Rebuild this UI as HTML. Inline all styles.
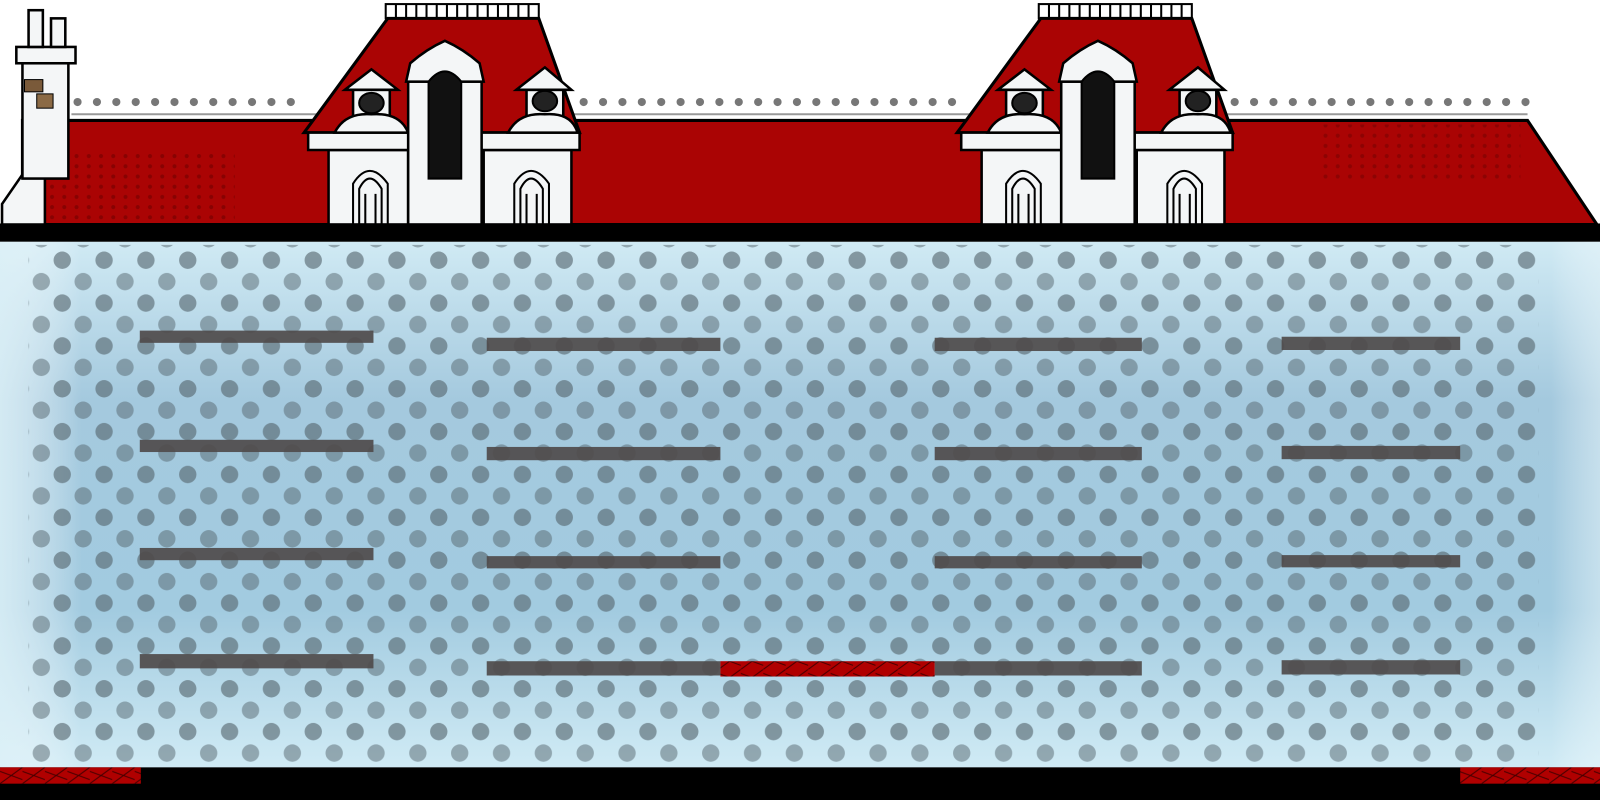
<!DOCTYPE html>
<html><head><meta charset="utf-8"><style>
html,body{margin:0;padding:0;width:1600px;height:800px;overflow:hidden;background:#fff}
svg{display:block}
</style></head><body>
<svg width="1600" height="800" viewBox="0 0 1600 800" xmlns="http://www.w3.org/2000/svg">
<defs>
<linearGradient id="sky" x1="0" y1="0" x2="0" y2="1">
<stop offset="0" stop-color="#d0eaf4"/><stop offset="0.3" stop-color="#a4c9de"/><stop offset="0.7" stop-color="#a2cbe0"/><stop offset="1" stop-color="#d0ebf5"/>
</linearGradient>
<linearGradient id="side" x1="0" y1="0" x2="1" y2="0">
<stop offset="0" stop-color="#dff2f8" stop-opacity="0.8"/><stop offset="0.05" stop-color="#fff" stop-opacity="0"/><stop offset="0.95" stop-color="#fff" stop-opacity="0"/><stop offset="1" stop-color="#dff2f8" stop-opacity="0.8"/>
</linearGradient>
<pattern id="dots" width="41" height="42" patternUnits="userSpaceOnUse" x="10" y="245">
<circle cx="10" cy="10" r="8.5" fill="#56666e" opacity="0.62"/>
<circle cx="30.5" cy="31" r="8.5" fill="#56666e" opacity="0.5"/>
</pattern>
<pattern id="rdots" width="12" height="10" patternUnits="userSpaceOnUse">
<circle cx="3" cy="3" r="2" fill="#5a0000" opacity="0.6"/>
</pattern>
<pattern id="hatch" width="22" height="16" patternUnits="userSpaceOnUse">
<rect width="22" height="16" fill="#b00000"/>
<path d="M0 16 L22 0 M0 4 L22 12" stroke="#400" stroke-width="1"/>
</pattern>
<g id="dormer">
<polygon points="82,18 230,18 270,130 0,130" fill="#aa0404" stroke="#000" stroke-width="3"/>
<rect x="80" y="4" width="150" height="14" fill="none" stroke="#000" stroke-width="2"/>
<g stroke="#000" stroke-width="2">
<line x1="90" y1="4" x2="90" y2="18"/><line x1="100" y1="4" x2="100" y2="18"/><line x1="110" y1="4" x2="110" y2="18"/><line x1="120" y1="4" x2="120" y2="18"/><line x1="130" y1="4" x2="130" y2="18"/><line x1="140" y1="4" x2="140" y2="18"/><line x1="150" y1="4" x2="150" y2="18"/><line x1="160" y1="4" x2="160" y2="18"/><line x1="170" y1="4" x2="170" y2="18"/><line x1="180" y1="4" x2="180" y2="18"/><line x1="190" y1="4" x2="190" y2="18"/><line x1="200" y1="4" x2="200" y2="18"/><line x1="210" y1="4" x2="210" y2="18"/><line x1="220" y1="4" x2="220" y2="18"/>
</g>
<g fill="#f4f6f7" stroke="#000" stroke-width="2.5">
<rect x="24" y="147" width="78" height="73"/>
<rect x="176" y="147" width="86" height="73"/>
<polygon points="4,130 105,130 105,147 4,147"/>
<polygon points="172,130 270,130 270,147 172,147"/>
<rect x="48" y="88" width="36" height="34"/>
<rect x="218" y="88" width="36" height="34"/>
<polygon points="40,88 66,68 92,88"/>
<polygon points="208,88 236,66 262,88"/>
<path d="M30,130 Q40,110 66,112 Q94,110 102,130Z"/>
<path d="M200,130 Q210,110 236,112 Q262,110 268,130Z"/>
<rect x="102" y="80" width="72" height="140"/>
<path d="M100,80 L104,62 Q120,48 138,40 Q156,48 172,62 L176,80Z"/>
</g>
<ellipse cx="66" cy="101" rx="12" ry="10" fill="#222" stroke="#000" stroke-width="2"/>
<ellipse cx="236" cy="99" rx="12" ry="10" fill="#222" stroke="#000" stroke-width="2"/>
<path d="M122,175 L122,80 Q138,60 154,80 L154,175Z" fill="#111" stroke="#000" stroke-width="2"/>
<g fill="none" stroke="#000" stroke-width="2">
<path d="M48,220 L48,180 Q64,155 82,180 L82,220"/>
<path d="M54,220 L54,185 Q64,165 76,185 L76,220"/>
<path d="M206,220 L206,180 Q222,155 240,180 L240,220"/>
<path d="M212,220 L212,185 Q222,165 234,185 L234,220"/>
<line x1="60" y1="190" x2="60" y2="220"/><line x1="70" y1="190" x2="70" y2="220"/>
<line x1="218" y1="190" x2="218" y2="220"/><line x1="228" y1="190" x2="228" y2="220"/>
</g>
</g>
</defs>
<g transform="scale(1.0204)">
<polygon points="22,118 1497,118 1565,220 22,220" fill="#aa0404" stroke="#000" stroke-width="3"/>
<rect x="30" y="150" width="200" height="65" fill="url(#rdots)" opacity="0.7"/>
<rect x="1290" y="122" width="200" height="55" fill="url(#rdots)" opacity="0.6"/>
<line x1="70" y1="112" x2="1497" y2="112" stroke="#999" stroke-width="2"/>
<g fill="#777">
<circle cx="76" cy="100" r="4"/><circle cx="95" cy="100" r="4"/><circle cx="114" cy="100" r="4"/><circle cx="133" cy="100" r="4"/><circle cx="152" cy="100" r="4"/><circle cx="171" cy="100" r="4"/><circle cx="190" cy="100" r="4"/><circle cx="209" cy="100" r="4"/><circle cx="228" cy="100" r="4"/><circle cx="247" cy="100" r="4"/><circle cx="266" cy="100" r="4"/><circle cx="285" cy="100" r="4"/>
<circle cx="572" cy="100" r="4"/><circle cx="591" cy="100" r="4"/><circle cx="610" cy="100" r="4"/><circle cx="629" cy="100" r="4"/><circle cx="648" cy="100" r="4"/><circle cx="667" cy="100" r="4"/><circle cx="686" cy="100" r="4"/><circle cx="705" cy="100" r="4"/><circle cx="724" cy="100" r="4"/><circle cx="743" cy="100" r="4"/><circle cx="762" cy="100" r="4"/><circle cx="781" cy="100" r="4"/><circle cx="800" cy="100" r="4"/><circle cx="819" cy="100" r="4"/><circle cx="838" cy="100" r="4"/><circle cx="857" cy="100" r="4"/><circle cx="876" cy="100" r="4"/><circle cx="895" cy="100" r="4"/><circle cx="914" cy="100" r="4"/><circle cx="933" cy="100" r="4"/>
<circle cx="1210" cy="100" r="4"/><circle cx="1229" cy="100" r="4"/><circle cx="1248" cy="100" r="4"/><circle cx="1267" cy="100" r="4"/><circle cx="1286" cy="100" r="4"/><circle cx="1305" cy="100" r="4"/><circle cx="1324" cy="100" r="4"/><circle cx="1343" cy="100" r="4"/><circle cx="1362" cy="100" r="4"/><circle cx="1381" cy="100" r="4"/><circle cx="1400" cy="100" r="4"/><circle cx="1419" cy="100" r="4"/><circle cx="1438" cy="100" r="4"/><circle cx="1457" cy="100" r="4"/><circle cx="1476" cy="100" r="4"/><circle cx="1495" cy="100" r="4"/>
</g>
<g fill="#f4f6f7" stroke="#000" stroke-width="2.5">
<polygon points="2,220 2,200 40,145 44,145 44,220"/>
<rect x="22" y="60" width="45" height="115"/>
<rect x="16" y="46" width="58" height="16"/>
<rect x="28" y="10" width="14" height="36"/>
<rect x="50" y="18" width="14" height="28"/>
</g>
<rect x="24" y="78" width="18" height="12" fill="#7a5a3a" stroke="#000"/>
<rect x="36" y="92" width="16" height="14" fill="#8b6a45" stroke="#000"/>
<use href="#dormer" x="298" y="0"/>
<use href="#dormer" x="938" y="0"/>
<rect x="0" y="219" width="1600" height="18" fill="#000"/>
<rect x="0" y="237" width="1600" height="516" fill="url(#sky)"/>
<rect x="0" y="237" width="1600" height="516" fill="url(#side)"/>
<rect x="28" y="240" width="1480" height="510" fill="url(#dots)"/>
<g fill="#4f4b4b" opacity="0.92">
<rect x="137" y="324" width="229" height="12"/><rect x="137" y="431" width="229" height="12"/><rect x="137" y="537" width="229" height="12"/><rect x="137" y="641" width="229" height="14"/>
<rect x="477" y="331" width="229" height="13"/><rect x="477" y="438" width="229" height="13"/><rect x="477" y="545" width="229" height="12"/><rect x="477" y="648" width="229" height="14"/>
<rect x="916" y="331" width="203" height="13"/><rect x="916" y="438" width="203" height="13"/><rect x="916" y="545" width="203" height="12"/><rect x="916" y="648" width="203" height="14"/>
<rect x="1256" y="330" width="175" height="13"/><rect x="1256" y="437" width="175" height="13"/><rect x="1256" y="544" width="175" height="12"/><rect x="1256" y="647" width="175" height="14"/>
</g>
<rect x="706" y="648" width="210" height="15" fill="url(#hatch)"/>
<rect x="0" y="752" width="1600" height="50" fill="#000"/>
<rect x="0" y="752" width="138" height="16" fill="url(#hatch)"/>
<rect x="1431" y="752" width="169" height="16" fill="url(#hatch)"/>
</g>
</svg>
</body></html>
